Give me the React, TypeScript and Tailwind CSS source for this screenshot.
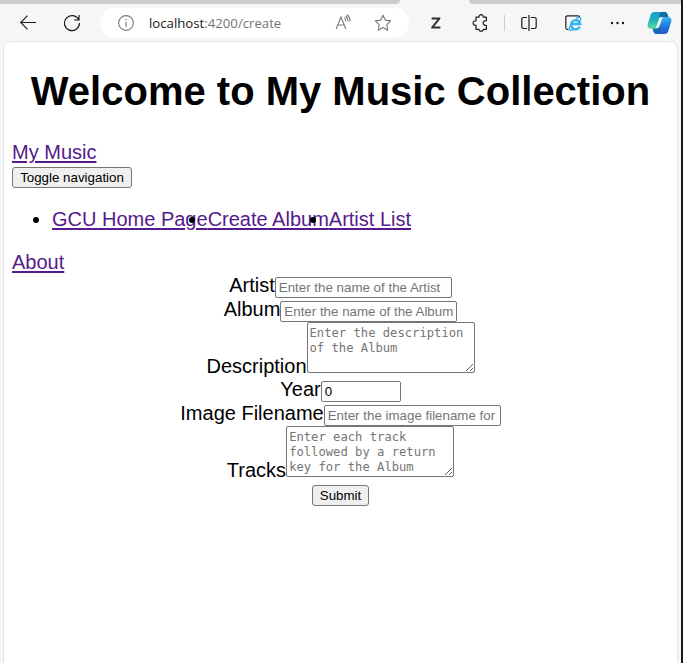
import type { ReactNode } from "react";

const control =
  "block shrink-0 rounded-[2px] border border-[#767676] bg-white leading-[15px] text-black placeholder:text-[#757575] placeholder:opacity-100 outline-none";
const textInput = control + " h-[21px] w-[177px] px-[3px] text-[13.333px]";
const textArea =
  control + " h-[51px] w-[168px] resize overflow-hidden px-[2px] pt-[3px] pb-px font-['DejaVu_Sans_Mono',monospace] text-[12.18px]";
const button =
  "block h-[21px] rounded-[3px] border border-[#767676] bg-[#efefef] text-center text-[13.333px] leading-[19px] text-black";
const link = "text-[#551a8b] underline decoration-[2px] underline-offset-[2px]";

function Row({ label, area, children }: { label: string; area?: boolean; children: ReactNode }) {
  return (
    <div className={area ? "flex h-14 items-start justify-center" : "flex h-6 items-start justify-center"}>
      <label className={area ? "pt-[33px]" : ""}>{label}</label>
      <div className={area ? "" : "pt-[3px]"}>{children}</div>
    </div>
  );
}

function Toolbar() {
  return (
    <header className="h-[41px] shrink-0 bg-[#f6f6f6]">
      <div className="flex h-1 justify-between">
        <div className="w-[400px] rounded-br-[4px] bg-[#cbcbcb]" />
        <div className="w-[212px] rounded-bl-[4px] bg-[#cbcbcb]" />
      </div>
      <div className="flex h-[37px] items-center pt-px">
        <svg className="ml-5 shrink-0" width="16" height="16" viewBox="0 0 16 16" fill="none" stroke="#191919" strokeWidth="1.15">
          <path d="M16 7.5H.8M7.5.7.7 7.5l6.8 6.8" />
        </svg>
        <svg className="ml-[27px] shrink-0" width="18" height="18" viewBox="0 0 18 18" fill="none" stroke="#191919" strokeWidth="1.2">
          <path d="M15.7 5.7A7.5 7.5 0 1 0 16.5 9M16 1v5h-5" />
        </svg>
        <div className="ml-[19px] flex h-[30px] w-[309px] shrink-0 items-center rounded-full bg-white">
          <svg className="ml-[18px] shrink-0" width="16" height="16" viewBox="0 0 16 16" fill="none" stroke="#777" strokeWidth="1.1">
            <circle cx="8" cy="8" r="7.4" />
            <path d="M8 6.8v5M8 4v1.3" />
          </svg>
          <span className="ml-[15px] w-[186px] whitespace-nowrap font-['Open_Sans','Noto_Sans',sans-serif] text-[13.2px] leading-5 text-[#747474]">
            <span className="text-[#202020]">localhost</span>:4200/create
          </span>
          <svg className="shrink-0" width="17" height="18" viewBox="0 0 17 18" fill="none" stroke="#777" strokeWidth="1.1">
            <path d="m1.2 15 4.8-12 4.8 12M2.8 11h6.4M9.2 3.6q1.8 1.5 1.5 3.8M10.6 2q2.7 2 2.2 5.4M11.8 .7q3.8 2.6 3.2 6.8" />
          </svg>
          <svg className="ml-[22px] shrink-0" width="18" height="18" viewBox="0 0 18 18" fill="none" stroke="#777" strokeWidth="1.1" strokeLinejoin="round">
            <path d="m9 1.2 2.3 4.9 5.4.8-3.9 3.8.9 5.6L9 13.6l-4.7 2.7.9-5.6-3.9-3.8 5.4-.8Z" />
          </svg>
        </div>
        <svg className="ml-[21px] shrink-0" width="12" height="14" viewBox="0 0 12 14" fill="#303033">
          <path d="M1.6 1.5h8.7v1.6L4.2 10.4h6.2v2.1H1.3v-1.6L7.4 3.6H1.6Z" />
        </svg>
        <svg className="ml-[30px] shrink-0" width="17" height="18" viewBox="0 0 17 18" fill="none" stroke="#202020" strokeWidth="1.25" strokeLinejoin="round">
          <path d="M4 3.2h3c-.3-3.3 4.6-3.3 4.2 0h3.2v3.4c-4.3-.1-4.3 4.9 0 4.8v3.9h-3.2c.4 2.5-4.5 2.5-4.2 0H4v-4c-3.9.4-3.9-4.9 0-4.5Z" />
        </svg>
        <div className="ml-[15px] h-4 w-px shrink-0 bg-[#ccc]" />
        <svg className="ml-4 shrink-0" width="16" height="18" viewBox="0 0 16 18" fill="none" stroke="#191919" strokeWidth="1.2">
          <path d="M6 3.5H2.5Q.8 3.5.8 5.2v7.6q0 1.7 1.7 1.7H6M10 3.5h3.5q1.7 0 1.7 1.7v7.6q0 1.7-1.7 1.7H10M8 1v16" />
        </svg>
        <svg className="ml-7 shrink-0" width="17" height="18" viewBox="0 0 17 18" fill="none">
          <path d="M3.5 15.3H2.3Q.8 15.3.8 13.5V3.6Q.8 1.8 2.6 1.8h10.3q1.8 0 1.8 1.5" stroke="#222" strokeWidth="1.2" />
          <path d="M14.8 12.8A4.6 4.6 0 1 1 15.2 10H6.8" stroke="#32b5ed" strokeWidth="2.4" />
          <path d="M5.1 12.1c-2.6 5.1 1 4.9 4.2 2.8M11 4.7c4-2.5 5.7-1.1 4 2.5" stroke="#32b5ed" strokeWidth="1.3" />
        </svg>
        <svg className="ml-7 shrink-0" width="15" height="4" viewBox="0 0 15 4" fill="#151515">
          <circle cx="2" cy="2" r="1.2" /><circle cx="7.5" cy="2" r="1.2" /><circle cx="13" cy="2" r="1.2" />
        </svg>
        <svg className="ml-[22px] shrink-0" width="25" height="24" viewBox="0 0 25 24">
          <defs>
            <linearGradient id="leaf" x1="0" y1="0" x2="0" y2="1"><stop stopColor="#169bcf" /><stop offset=".5" stopColor="#20b2bd" /><stop offset="1" stopColor="#5cdb98" /></linearGradient>
            <linearGradient id="petal" x1="0" y1="0" x2="0" y2="1"><stop stopColor="#36b4f0" /><stop offset=".6" stopColor="#1e72df" /><stop offset="1" stopColor="#2455c5" /></linearGradient>
          </defs>
          <path d="M7.4 1h10.3q2 0 2.8 2.3l.9 2.8h-4.1q-1.8 0-2.5 2.2L12 16.2q-.7 1.5-2.5 1.5H3.8Q-.2 17.7.8 13L3.6 4Q4.5 1 7.4 1Z" fill="url(#leaf)" />
          <path d="M13.7 1h4q2 0 2.8 2.3l.9 2.8h-4.1q-1.8 0-2.5 2.2l-.4 1.2L12 5Z" fill="#146a9d" />
          <path d="M17.3 6.1h3.9q3.9.3 3.1 4.5l-2.9 9.2Q20.4 23 17.5 23H9.8q-2.5 0-3.2-2.6l-.9-2.7h3.8q1.8 0 2.5-1.5l2.8-7.9q.7-2.2 2.5-2.2Z" fill="url(#petal)" />
          <path d="M5.7 17.7h3.8q1.8 0 2.5-1.5l.7-1.9 1.3 6.2L11.2 23H9.8q-2.5 0-3.2-2.6Z" fill="#1766ba" />
          <path d="M12.2 7.2q.4-1 1.5-1h3.2q-1.4.4-2 2l-2.4 6.9q-.7 2-2.8 2H8.9Z" fill="#f6f6f6" />
        </svg>
      </div>
    </header>
  );
}

export default function App() {
  return (
    <div className="flex h-[663px] w-[683px] overflow-hidden bg-[#191a1c] font-['Liberation_Sans',Arial,sans-serif]">
      <div className="flex w-[681px] shrink-0 flex-col bg-[#f6f6f6]">
        <Toolbar />
        <main className="ml-[3px] h-[622px] w-[675px] rounded-t-[8px] border border-b-0 border-[#e5e5e5] bg-white px-2 text-[20px] leading-[23px] text-black">
          <h1 className="mt-[26px] whitespace-nowrap text-center text-[40px] font-bold leading-[46px]">Welcome to My Music Collection</h1>
          <nav className="mt-[27px]">
            <a className={"block w-fit " + link}>My Music</a>
            <button className={button + " mt-[3px] w-[120px]"}>Toggle navigation</button>
            <ul className="mt-5 flex list-disc whitespace-nowrap pl-10">
              <li><a className={link}>GCU Home Page</a></li>
              <li><a className={link}>Create Album</a></li>
              <li><a className={link}>Artist List</a></li>
            </ul>
            <a className={"mt-5 block w-fit " + link}>About</a>
          </nav>
          <form>
            <Row label="Artist"><input className={textInput} placeholder="Enter the name of the Artist" /></Row>
            <Row label="Album"><input className={textInput} placeholder="Enter the name of the Album" /></Row>
            <Row label="Description" area><textarea className={textArea} placeholder="Enter the description of the Album" /></Row>
            <Row label="Year"><input className={control + " h-[21px] w-20 px-[3px] text-[13.333px]"} defaultValue="0" /></Row>
            <Row label="Image Filename"><input className={textInput} placeholder="Enter the image filename for the Album" /></Row>
            <Row label="Tracks" area><textarea className={textArea} placeholder="Enter each track followed by a return key for the Album" /></Row>
            <button type="button" className={button + " mx-auto mt-[3px] w-[57px]"}>Submit</button>
          </form>
        </main>
      </div>
    </div>
  );
}
